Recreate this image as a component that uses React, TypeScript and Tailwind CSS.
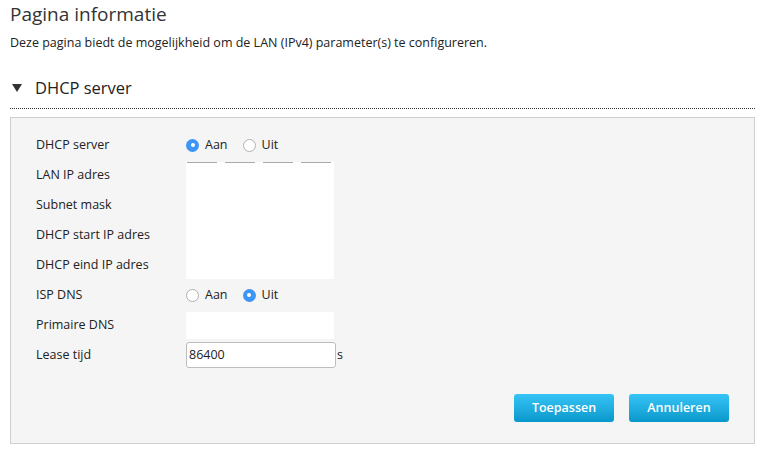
import React from "react";

const font = { fontFamily: '"Open Sans", "Noto Sans", sans-serif' };

function Radio({ checked, label }: { checked: boolean; label: string }) {
  return (
    <div className="flex items-center">
      {checked ? (
        <span className="w-[13px] h-[13px] rounded-full bg-[#3d95f5] flex items-center justify-center">
          <span className="w-[4px] h-[4px] rounded-full bg-white" />
        </span>
      ) : (
        <span className="w-[13px] h-[13px] rounded-full bg-white border border-[#b0b0b0]" />
      )}
      <span className="ml-[6px] text-[12.5px] text-[#222]">{label}</span>
    </div>
  );
}

export default function App() {
  const labels = [
    "DHCP server",
    "LAN IP adres",
    "Subnet mask",
    "DHCP start IP adres",
    "DHCP eind IP adres",
    "ISP DNS",
    "Primaire DNS",
    "Lease tijd",
  ];
  return (
    <div className="w-[764px] h-[457px] bg-white text-[#333] px-[10px]" style={font}>
      <div className="pt-[1px] text-[19px] leading-[26px] text-[#333]">Pagina informatie</div>
      <div className="mt-[8px] text-[12.5px] leading-[16px] text-[#222]">
        Deze pagina biedt de mogelijkheid om de LAN (IPv4) parameter(s) te configureren.
      </div>
      <div className="mt-[25px] flex items-center w-[745px] h-[24px]">
        <svg width="10" height="8" viewBox="0 0 10 8" className="ml-[2px]">
          <polygon points="0,0 10,0 5,8" fill="#333" />
        </svg>
        <span className="ml-[13px] text-[16.5px] leading-[24px] text-[#222]">DHCP server</span>
      </div>
      <div className="mt-[8px] w-[745px] border-t border-dotted border-[#333]" />
      <div className="mt-[8px] w-[745px] h-[327px] border border-[#cfcfcf] bg-[#f5f5f5] pl-[25px] pr-[25px] pt-[12px] flex flex-col">
        <div className="flex">
          <div className="w-[150px] flex flex-col">
            {labels.map((l) => (
              <div key={l} className="h-[30px] flex items-center text-[12.5px] text-[#222]">
                {l}
              </div>
            ))}
          </div>
          <div className="flex flex-col">
            <div className="h-[30px] flex items-center gap-[15px]">
              <Radio checked label="Aan" />
              <Radio checked={false} label="Uit" />
            </div>
            <div className="h-[120px] pt-[2px]">
              <div className="w-[148px] h-[117px] bg-white flex flex-col">
                <div className="flex gap-[8px] pl-[1px]">
                  <span className="w-[30px] h-[1px] bg-[#aaa]" />
                  <span className="w-[30px] h-[1px] bg-[#aaa]" />
                  <span className="w-[30px] h-[1px] bg-[#aaa]" />
                  <span className="w-[30px] h-[1px] bg-[#aaa]" />
                </div>
              </div>
            </div>
            <div className="h-[30px] flex items-center gap-[15px]">
              <Radio checked={false} label="Aan" />
              <Radio checked label="Uit" />
            </div>
            <div className="h-[30px] pt-[2px]">
              <div className="w-[148px] h-[27px] bg-white" />
            </div>
            <div className="h-[30px] flex items-center">
              <div className="w-[150px] h-[26px] bg-white border border-[#bdbdbd] rounded-[3px] flex items-center pl-[2px] text-[12.5px] text-[#222]">
                86400
              </div>
              <span className="ml-[1px] text-[12.5px] text-[#222]">s</span>
            </div>
          </div>
        </div>
        <div className="mt-[24px] flex justify-end gap-[15px]">
          <button className="w-[100px] h-[28px] rounded-[3px] bg-gradient-to-b from-[#35c4f5] to-[#0598cb] text-white text-[12.5px] font-semibold">
            Toepassen
          </button>
          <button className="w-[100px] h-[28px] rounded-[3px] bg-gradient-to-b from-[#35c4f5] to-[#0598cb] text-white text-[12.5px] font-semibold">
            Annuleren
          </button>
        </div>
      </div>
    </div>
  );
}
